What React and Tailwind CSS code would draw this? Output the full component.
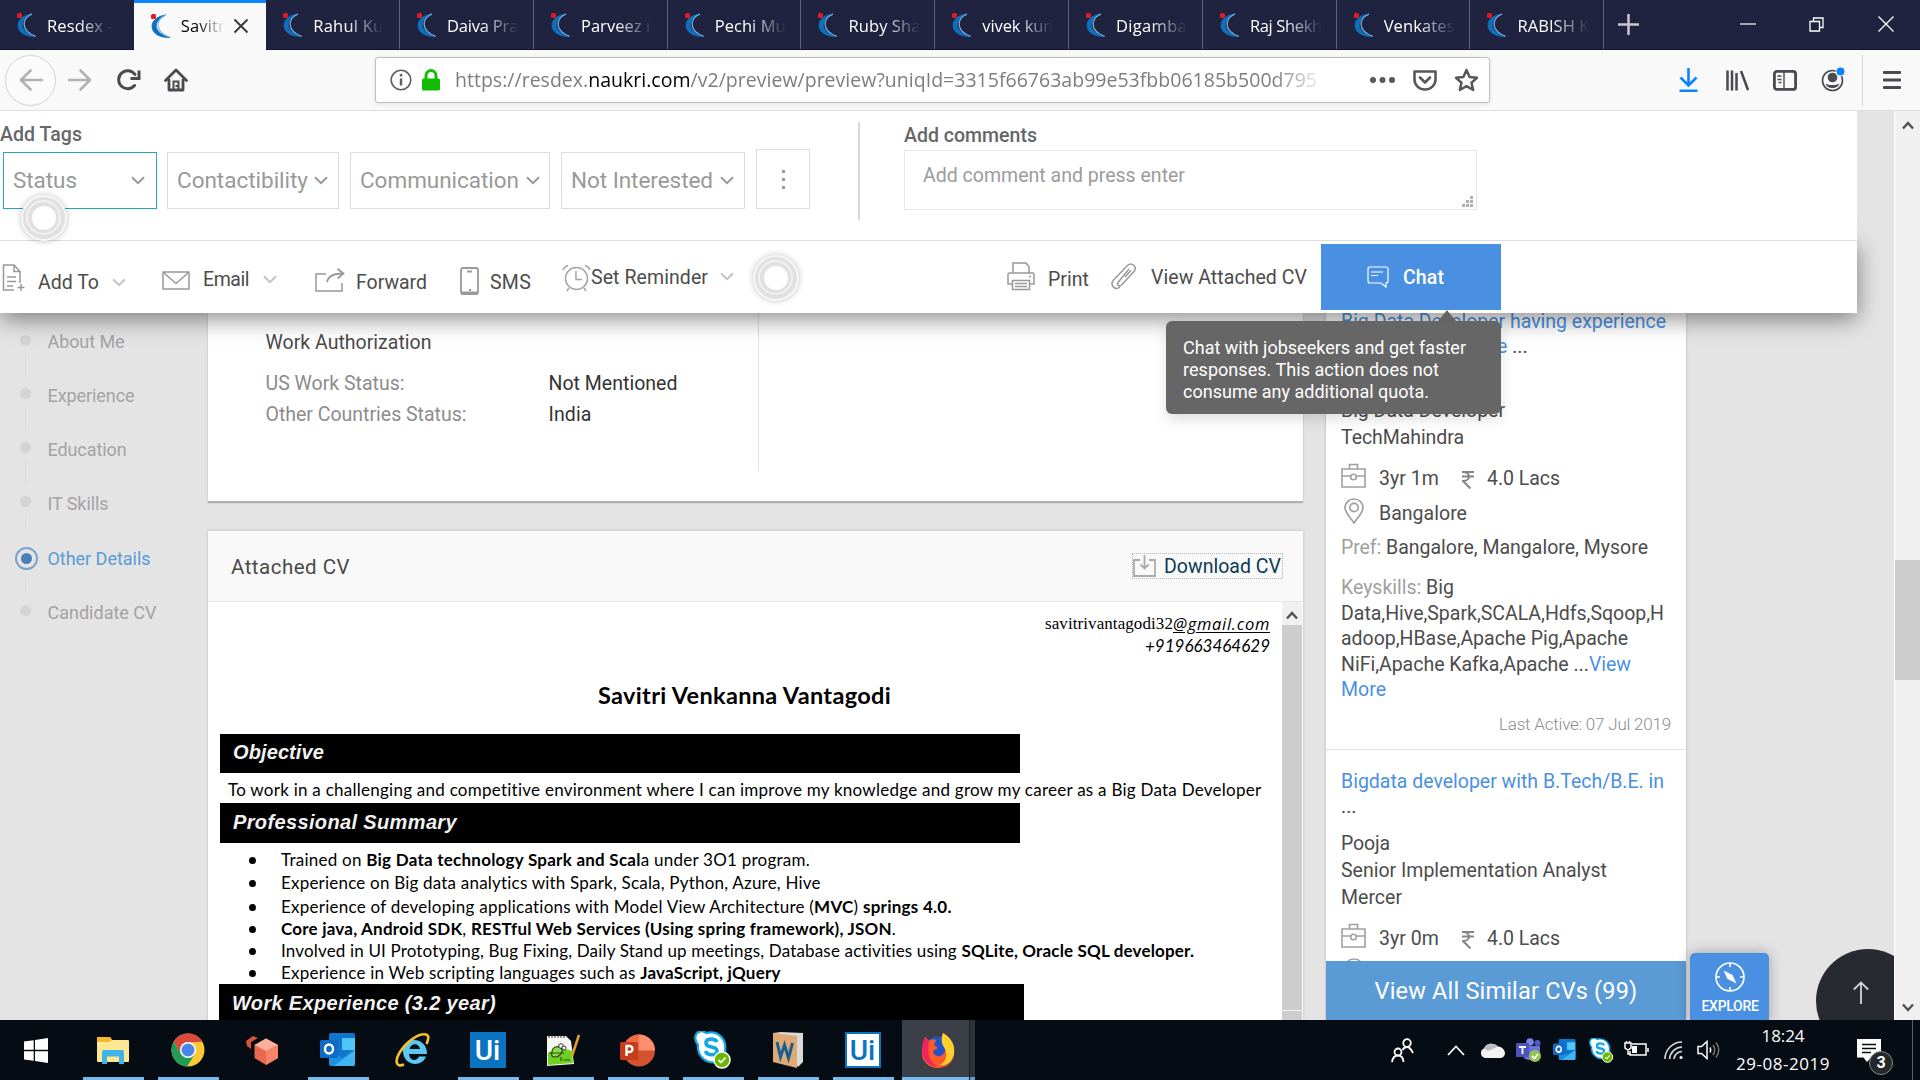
import React, { useLayoutEffect, useRef, useState } from "react";

/* One line of text whose tracking is adjusted so that it is `w` pixels wide. */
function T({ w, className = "", children }) {
  const ref = useRef(null);
  const [spacing, setSpacing] = useState(0);
  useLayoutEffect(() => {
    const el = ref.current;
    if (!w || !el) return;
    el.style.letterSpacing = "0px";
    const natural = el.getBoundingClientRect().width;
    const value = (w - natural) / el.textContent.length;
    el.style.letterSpacing = value + "px";
    setSpacing(value);
  }, [w]);
  return (
    <span ref={ref} style={{ letterSpacing: spacing }} className={"block w-fit shrink-0 whitespace-pre " + className}>
      {children}
    </span>
  );
}

function Svg({ w, h, vb, className = "", children, sw = 1.5 }) {
  return (
    <svg width={w} height={h} viewBox={vb || `0 0 ${w} ${h}`} className={"block shrink-0 " + className} fill="none" stroke="currentColor" strokeWidth={sw}>
      {children}
    </svg>
  );
}

const Chevron = ({ className = "" }) => (
  <Svg w={14} h={9} sw={2} className={className}>
    <path d="M1 1.2 7 7.2 13 1.2" />
  </Svg>
);

const Favicon = () => (
  <Svg w={22} h={25} className="ml-[16px]">
    <path d="M16 1C2 7 3 19 20 23.500C11 24 2 20 2 12.500C2 6 8 2 16 1Z" fill="#0f6fbd" stroke="#0f6fbd" strokeWidth="0.800" />
    <path d="M16 1C5 6 5 18 19.500 23.200" stroke="#7fb6e0" strokeWidth="1.200" />
    <rect x="1" y="0" width="5" height="5" rx="1.500" fill="#e01b24" stroke="none" />
  </Svg>
);

const TABS = [
  ["Resdex -", 66], ["Savitr", 44], ["Rahul Ku", 70], ["Daiva Pra", 71], ["Parveez r", 72], ["Pechi Mu", 71],
  ["Ruby Sha", 72], ["vivek kun", 71], ["Digamba", 71], ["Raj Shekh", 72], ["Venkates", 71], ["RABISH K", 72],
];

function TabBar() {
  return (
    <div className="flex h-[50px] w-[1920px] shrink-0 border-b border-[#12142c] bg-[#202340] font-['Open_Sans',sans-serif]">
      {TABS.map(([name, w], i) =>
        i === 1 ? (
          <div key={name} className="flex h-[50px] w-[132.500px] shrink-0 items-center border-t-[3px] border-[#0a84ff] bg-[#f9f9fa] pb-[1px] text-black">
            <Favicon />
            <T w={w} className="ml-[9px] text-[16.500px] leading-[24px] [mask-image:linear-gradient(to_right,black_35%,transparent_100%)]">{name}</T>
            <Svg w={16} h={16} sw={2} className="ml-[8px] text-[#3c3c3c]"><path d="M1.500 1.500 14.500 14.500M14.500 1.500 1.500 14.500" /></Svg>
          </div>
        ) : (
          <div key={name} className={"flex h-[49px] w-[133.800px] shrink-0 items-center pt-[2px] text-white " + (i > 1 ? "border-r border-[#5d5f74]" : "")}>
            <Favicon />
            <T w={w} className="ml-[9px] text-[16.500px] leading-[24px] [mask-image:linear-gradient(to_right,black_48%,transparent_100%)]">{name}</T>
          </div>
        )
      )}
      <div className="flex h-[48px] grow items-center text-white">
        <Svg w={21} h={21} sw={2.5} className="ml-[14px] text-[#c7c8d0]"><path d="M10.500 0V21M0 10.500H21" /></Svg>
        <Svg w={16} h={2} sw={1.2} className="ml-[101px]"><path d="M0 1H16" /></Svg>
        <Svg w={15} h={15} sw={1.3} className="ml-[53px]"><path d="M1 4.500H10.500V14H1ZM4.500 4.500V1H14V10.500H10.500" /></Svg>
        <Svg w={16} h={16} sw={1.3} className="ml-[54px]"><path d="M.5.5 15.500 15.500M15.500.5.5 15.500" /></Svg>
      </div>
    </div>
  );
}

function Toolbar() {
  return (
    <div className="flex h-[61px] w-[1920px] shrink-0 items-center border-b border-[#dedede] bg-[#f9f9fa] text-[#4a4a4f]">
      <div className="ml-[5px] flex size-[51px] shrink-0 items-center justify-center rounded-full border border-[#d2d2d2] bg-[#fbfbfb] text-[#b1b1b3]">
        <Svg w={24} h={22} sw={2.6}><path d="M23 11H2M11.500 1.500 2 11 11.500 20.500" strokeLinecap="round" strokeLinejoin="round" /></Svg>
      </div>
      <Svg w={24} h={22} sw={2.6} className="ml-[12px] text-[#b1b1b3]"><path d="M1 11H22M12.500 1.500 22 11 12.500 20.500" strokeLinecap="round" strokeLinejoin="round" /></Svg>
      <Svg w={24} h={22} sw={3} className="ml-[25px]">
        <path d="M17.500 16.500A9 9 0 1 1 18 5.500" strokeLinecap="round" />
        <path d="M22 1.500V9.500H13.500" strokeWidth="3" />
      </Svg>
      <Svg w={24} h={24} sw={2.8} className="ml-[23px]">
        <path d="M1.500 12.500 12 2 22.500 12.500M5 12V22H19V12" strokeLinecap="round" strokeLinejoin="round" />
        <path d="M9.500 21V13.500H14.500V21M12.500 17V19" strokeWidth="2" />
      </Svg>
      <div className="ml-[187px] flex h-[46px] w-[1115px] shrink-0 items-center rounded-[3px] border border-[#bebebe] bg-white shadow-[0_1px_4px_rgba(0,0,0,0.1)]">
        <Svg w={22} h={22} sw={1.6} className="ml-[14px] text-[#5f5f63]">
          <circle cx="11" cy="11" r="9.800" /><path d="M11 9.500V16.500M11 5V7.500" strokeWidth="2.400" />
        </Svg>
        <Svg w={18} h={22} className="ml-[10px] text-[#12bc00]">
          <path d="M4 10V6.500A5 5 0 0 1 14 6.500V10" strokeWidth="3" /><rect y="9.500" width="18" height="12" rx="1.500" fill="currentColor" stroke="none" />
        </Svg>
        <T w={862} className="ml-[15px] font-['Open_Sans',sans-serif] text-[19.500px] leading-[28px] text-[#7d7d80] [mask-image:linear-gradient(to_right,black_95%,transparent_101%)]">
          https://resdex.<span className="text-black">naukri.com</span>/v2/preview/preview?uniqId=3315f66763ab99e53fbb06185b500d795
        </T>
        <Svg w={25} h={6} className="ml-[53px] text-[#58585c]"><g fill="currentColor" stroke="none"><circle cx="3" cy="3" r="3" /><circle cx="12.500" cy="3" r="3" /><circle cx="22" cy="3" r="3" /></g></Svg>
        <Svg w={24} h={21} sw={2.6} className="ml-[18px] text-[#58585c]">
          <path d="M1.500 1.500H22.500V9.500A10.500 10 0 0 1 1.500 9.500Z" strokeLinejoin="round" /><path d="M7 7.500 12 12.500 17 7.500" strokeLinecap="round" strokeLinejoin="round" />
        </Svg>
        <Svg w={25} h={24} sw={2.5} className="ml-[17px] text-[#58585c]">
          <path d="M12.500 2 15.600 9 23 9.800 17.500 14.700 19.200 22 12.500 18.200 5.800 22 7.500 14.700 2 9.800 9.400 9Z" strokeLinejoin="round" />
        </Svg>
      </div>
      <Svg w={19} h={24} sw={2.6} className="ml-[189px] text-[#0a84ff]"><path d="M9.500 0V17M1.500 9.500 9.500 17.500 17.500 9.500M.5 22.700H18.500" /></Svg>
      <Svg w={23} h={21} sw={2.5} className="ml-[28px]"><path d="M1.500.5V20.500M6 .5V20.500M10.500 3V20.500M15 1 22 20" /></Svg>
      <Svg w={24} h={21} sw={2.8} className="ml-[24px]">
        <rect x="1.400" y="1.400" width="21.200" height="18" rx="2.500" /><path d="M11 1.500V19.500" strokeWidth="1.400" /><path d="M4.500 6H8.500M4.500 9.500H8.500M5.500 12.500H8.500" strokeWidth="1.500" />
      </Svg>
      <Svg w={24} h={25} sw={1.6} className="ml-[24px] mb-[2px]">
        <circle cx="11.500" cy="13.500" r="10" /><circle cx="11.500" cy="10.500" r="4.800" fill="currentColor" stroke="none" /><path d="M4.500 16.500C8 18.500 15 18.500 18.500 16.500C17 20 14.500 21 11.500 21S6 20 4.500 16.500Z" fill="currentColor" stroke="none" />
        <circle cx="19.500" cy="4.500" r="4.500" fill="#0a84ff" stroke="#f9f9fa" strokeWidth="1" />
      </Svg>
      <div className="ml-[17px] h-[51px] w-px bg-[#d7d7d8]" />
      <Svg w={18} h={20} sw={2.8} className="ml-[20px]"><path d="M1 2.500H17M1 10H17M1 17.500H17" strokeLinecap="round" /></Svg>
    </div>
  );
}

const Pulse = ({ className }) => (
  <div className={"absolute flex size-[46px] items-center justify-center rounded-full border-2 border-[#f7f7f7] bg-[#e0e0e0] shadow-[0_0_6px_rgba(0,0,0,0.25)] " + className}>
    <div className="flex size-[35px] items-center justify-center rounded-full border-2 border-[#f1f1f1] bg-[#e0e0e0]">
      <div className="size-[24px] rounded-full bg-white" />
    </div>
  </div>
);

function ActionPanel() {
  const tag = "flex h-[57px] shrink-0 items-center border border-[#dcdcdc] pl-[9px] pb-[2px] text-[22.500px] leading-[30px] text-[#999]";
  const action = "text-[19.500px] leading-[26px] text-[#4c4c4c]";
  return (
    <div className="relative z-10 h-[202px] w-[1857px] shrink-0 bg-white">
      <div className="relative z-10 flex h-[130px] border-b border-[#dcdcdc] bg-white">
        <div className="w-[858px] pt-[11px]">
          <T w={82} className="text-[19.500px] font-medium leading-[26px] text-[#666]">Add Tags</T>
          <div className="mt-[1px] flex items-end">
            <div className={tag + " ml-[3px] w-[154px] !border-[#25a5c2]"}><T w={64}>Status</T><Chevron className="ml-[54px] mt-[2px]" /></div>
            <div className={tag + " ml-[10px] w-[172px]"}><T w={131}>Contactibility</T><Chevron className="ml-[6px] mt-[2px]" /></div>
            <div className={tag + " ml-[11px] w-[200px]"}><T w={159}>Communication</T><Chevron className="ml-[7px] mt-[2px]" /></div>
            <div className={tag + " ml-[11px] w-[184px]"}><T w={142}>Not Interested</T><Chevron className="ml-[7px] mt-[2px]" /></div>
            <div className="ml-[11px] flex h-[60px] w-[54px] flex-col items-center justify-center gap-[5px] border border-[#dcdcdc]">
              {[0, 1, 2].map((i) => <div key={i} className="size-[3px] bg-[#999]" />)}
            </div>
          </div>
        </div>
        <div className="mt-[11px] h-[98px] w-[2px] bg-[#d9d9d9]" />
        <div className="ml-[44px] pt-[12px]">
          <T w={133} className="text-[19.500px] font-medium leading-[26px] text-[#666]">Add comments</T>
          <div className="mt-[1px] flex h-[60px] w-[573px] justify-between border border-[#e6e6e6] pl-[18px] pr-[2px]">
            <T w={262} className="mt-[12px] text-[19.500px] leading-[26px] text-[#9c9c9c]">Add comment and press enter</T>
            <Svg w={12} h={12} className="mb-[2px] self-end text-[#b0b0b0]"><path d="M0 10.500H3M4 10.500H7M8 10.500H11M4 6.500H7M8 6.500H11M8 2.500H11" strokeWidth="3" /></Svg>
          </div>
        </div>
      </div>
      <div className="flex h-[72px] items-start bg-white pl-px pt-px shadow-[0_6px_22px_rgba(0,0,0,0.45)]">
        <Svg w={23} h={28} className="ml-[1px] mt-[22px] text-[#999]"><path d="M12 26H1.500V1H12L18 7.500V19M12 1V7.500H18M5 13H14M5 17.500H14M5 22H11M19 20V27M15.500 23.500H22.500" /></Svg>
        <T w={61} className={action + " ml-[13px] mt-[28px]"}>Add To</T>
        <Chevron className="ml-[13px] mt-[36px] text-[#c4c4c4]" />
        <Svg w={28} h={19} className="ml-[36px] mt-[29px] text-[#999]"><path d="M1 1H27V18H1ZM1.500 1.500 14 12.500 26.500 1.500" /></Svg>
        <T w={46} className={action + " ml-[13px] mt-[25px]"}>Email</T>
        <Chevron className="ml-[14px] mt-[33px] text-[#c4c4c4]" />
        <Svg w={30} h={24} className="ml-[38px] mt-[26px] text-[#999]"><path d="M11 6H1V23H27V15" /><path d="M12 14C13 9 17 5.500 28.500 5.500M22.500 .8 28.500 5.500 22.500 10.500" strokeWidth="1.800" /></Svg>
        <T w={71} className={action + " ml-[11px] mt-[28px]"}>Forward</T>
        <Svg w={19} h={28} sw={1.8} className="ml-[33px] mt-[25px] text-[#999]"><rect x="1" y="1" width="17" height="26" rx="2" /><path d="M7 4.500H12M9 23H11" /><path d="M1 26H18" strokeWidth="3" /></Svg>
        <T w={41} className={action + " ml-[11px] mt-[28px]"}>SMS</T>
        <Svg w={29} h={28} className="ml-[31px] mt-[22px] text-[#a5a5a5]"><circle cx="14.500" cy="14.500" r="11" /><path d="M14 7V15.500H20M1 6A7 7 0 0 1 6 1.500M28 6A7 7 0 0 0 23 1.500M7 24 5 27M22 24 24 27" /></Svg>
        <T w={117} className={action + " mt-[23px]"}>Set Reminder</T>
        <Chevron className="ml-[12px] mt-[30px] text-[#c4c4c4]" />
        <Svg w={28} h={29} className="ml-[273px] mt-[20px] text-[#999]"><path d="M6 11V1H19L22 4.500V11M6 22H1V12.500Q1 11 2.500 11H25.500Q27 11 27 12.500V22H22M5.500 18.500H22.500V27.500H5.500ZM8 21.500H20M8 24.500H20M22 14.500H24" /></Svg>
        <T w={41} className={action + " ml-[13px] mt-[25px]"}>Print</T>
        <Svg w={27} h={27} className="ml-[21px] mt-[21px] text-[#999]"><path d="M19 6 8 19.500C6.500 22 9.500 24 11.500 22L24 8.500C27.500 4 22 -1.500 17.500 2.500L3.500 17C-.5 22 5 28 10 24" /><path d="M15 14 21 7.500" /></Svg>
        <T w={156} className={action + " ml-[14px] mt-[23px]"}>View Attached CV</T>
        <div className="relative ml-[14px] mt-[2px] flex h-[66px] w-[180px] shrink-0 items-center bg-[#4a90e2] pl-[46px] text-white">
          <Svg w={22} h={22} sw={1.2}><path d="M3 1H19Q21 1 21 3V15Q21 17 19 17V21L14 17H3Q1 17 1 15V3Q1 1 3 1ZM4 6H16M4 9.500H11" /></Svg>
          <T w={41} className="ml-[14px] mt-[1px] text-[19.500px] font-medium leading-[26px]">Chat</T>
          <div className="absolute left-[117px] top-[66px] size-0 border-x-[9px] border-b-[11px] border-x-transparent border-b-[#666]" />
          <div className="absolute -left-[155px] top-[77px] flex h-[93px] w-[335px] flex-col rounded-[6px] bg-[#666] pl-[17px] pt-[16px] text-[18px] leading-[22px] shadow-[0_6px_14px_rgba(0,0,0,0.12)]">
            <T w={283}>Chat with jobseekers and get faster</T>
            <T w={256}>responses. This action does not</T>
            <T w={246}>consume any additional quota.</T>
          </div>
        </div>
      </div>
      <Pulse className="left-[20.500px] top-[83.500px] z-20" />
      <Pulse className="left-[752.500px] top-[143.500px] z-20" />
    </div>
  );
}

const NAV = [["About Me", 77], ["Experience", 87], ["Education", 79], ["IT Skills", 61], ["Other Details", 103], ["Candidate CV", 109]];

function SideNav() {
  return (
    <div className="w-[208px] shrink-0">
      {NAV.map(([name, w], i) => (
        <div key={name} className="flex h-[54.150px] items-start">
          <div className="ml-[14px] flex h-[54px] w-[23px] shrink-0 flex-col items-center">
            {i === 4 ? (
              <div className="ml-[2px] mt-[17px] flex size-[23px] shrink-0 items-center justify-center rounded-full border-2 border-[#7ba3cb]"><div className="size-[11px] rounded-full bg-[#4a80b8]" /></div>
            ) : (
              <>
                <div className={"w-px " + (i === 0 ? "h-[10px]" : "h-[9px] bg-[#dadada]")} />
                <div className="mt-[12px] size-[11px] shrink-0 rounded-full bg-[#d4d4d4]" />
              </>
            )}
            {i < 5 && <div className="mt-[8px] w-px grow bg-[#dadada]" />}
          </div>
          <T w={w} className={"ml-[10.500px] mt-[16px] text-[18px] leading-[26px] " + (i === 4 ? "text-[#5b9bd5]" : "text-[#a3a3a3]")}>{name}</T>
        </div>
      ))}
    </div>
  );
}

const Up = ({ className = "" }) => <Svg w={12} h={9} sw={2.4} className={className}><path d="M1 7.500 6 2 11 7.500" /></Svg>;

const SectionBar = ({ w, children, className }) => (
  <div className={"flex shrink-0 bg-black text-[#f2f2f2] font-['Liberation_Sans',sans-serif] text-[20px] font-bold italic leading-[24px] " + className}>
    <T w={w}>{children}</T>
  </div>
);

const Bullet = ({ w, className = "", children }) => (
  <div className={"flex h-[22px] items-center " + className}>
    <div className="ml-[41px] size-[7px] rounded-full bg-black" />
    <T w={w} className="ml-[25px]">{children}</T>
  </div>
);

function MainColumn() {
  return (
    <div className="flex w-[1095px] shrink-0 flex-col">
      <div className="flex h-[188px] shrink-0 bg-white text-[19.500px] shadow-[0_2px_1px_#b0b0b0,0_0_2px_#ccc]">
        <div className="h-[158px] w-[551px] border-r border-[#e2e2e2] pl-[57.500px] pt-[17px] leading-[26px]">
          <T w={166} className="text-[#4a4a4a]">Work Authorization</T>
          <div className="mt-[15px] flex text-[#8c8c8c]"><div className="w-[283px]"><T w={139}>US Work Status:</T></div><T w={129} className="text-[#333]">Not Mentioned</T></div>
          <div className="mt-[5px] flex text-[#8c8c8c]"><div className="w-[283px]"><T w={201}>Other Countries Status:</T></div><T w={43} className="text-[#333]">India</T></div>
        </div>
      </div>
      <div className="mt-[30px] flex h-[489px] shrink-0 flex-col bg-white shadow-[0_0_3px_#bbb]">
        <div className="flex h-[71px] shrink-0 items-center justify-between border-b border-[#e4e4e4] bg-[#f9f9f9] pl-[23px] pr-[20px]">
          <T w={119} className="mt-[1px] text-[20.500px] leading-[26px] text-[#4a4a4a]">Attached CV</T>
          <div className="flex h-[26px] w-[151px] items-center border border-dotted border-[#b5b5b5]">
            <Svg w={23} h={22} sw={1.8} className="text-[#aaa]"><path d="M7 5H1V21H22V5H16M11.500 0V13M7.500 9.500 11.500 13.500 15.500 9.500" /></Svg>
            <T w={117} className="ml-[8px] mt-[1px] text-[19.500px] leading-[26px] text-[#0c3a57]">Download CV</T>
          </div>
        </div>
        <div className="flex h-[418px] overflow-hidden">
          <div className="w-[1074px] shrink-0 pt-[11px] font-['Lato',sans-serif] text-[17px] leading-[22px] text-black">
            <div className="flex justify-end pr-[12px]">
              <T w={128} className="font-['Liberation_Serif',serif] text-[17px]">savitrivantagodi32</T>
              <T w={97} className="font-['Open_Sans',sans-serif] text-[16.500px] italic underline underline-offset-2">@gmail.com</T>
            </div>
            <div className="flex justify-end pr-[12px]"><T w={125} className="italic">+919663464629</T></div>
            <T w={293} className="ml-[390px] mt-[23px] text-[23.500px] font-bold leading-[30px]">Savitri Venkanna Vantagodi</T>
            <SectionBar w={91} className="mt-[24px] ml-[12px] h-[39px] w-[800px] pl-[13px] pt-[6px]">Objective</SectionBar>
            <div className="flex h-[30px] pl-[20px] pt-[6px]"><T w={1034}>To work in a challenging and competitive environment where I can improve my knowledge and grow my career as a Big Data Developer</T></div>
            <SectionBar w={224} className="ml-[12px] h-[40px] w-[800px] pl-[13px] pt-[7px]">Professional Summary</SectionBar>
            <Bullet w={529} className="mt-[6px]">Trained on <b>Big Data technology Spark and Scal</b>a under 3O1 program.</Bullet>
            <Bullet w={540} className="mt-[1px]">Experience on Big data analytics with Spark, Scala, Python, Azure, Hive</Bullet>
            <Bullet w={671} className="mt-[2px]">Experience of developing applications with Model View Architecture (<b>MVC</b>) <b>springs 4.0.</b></Bullet>
            <Bullet w={615}><b>Core java, Android SDK</b>, <b>RESTful Web Services (Using spring framework), JSON</b>.</Bullet>
            <Bullet w={914}>Involved in UI Prototyping, Bug Fixing, Daily Stand up meetings, Database activities using <b>SQLite, Oracle SQL developer.</b></Bullet>
            <Bullet w={500}>Experience in Web scripting languages such as <b>JavaScript, jQuery</b></Bullet>
            <SectionBar w={264} className="ml-[11px] h-[40px] w-[805px] pl-[13px] pt-[7px]">Work Experience (3.2 year)</SectionBar>
          </div>
          <div className="flex w-[20px] flex-col bg-[#f0f0f0]">
            <div className="flex h-[23px] shrink-0 items-center justify-center pt-[3px] text-[#505050]"><Up /></div>
            <div className="h-[385px] bg-[#cdcdcd]" />
            <div className="mt-px h-[9px] bg-[#cdcdcd]" />
          </div>
        </div>
      </div>
    </div>
  );
}

const Pin = () => <Svg w={20} h={26} sw={1.7} className="mb-[6px] ml-[3px] text-[#a0a0a0]"><path d="M10 1C4.500 1 1 5 1 9.500C1 15 7 20 10 25C13 20 19 15 19 9.500C19 5 15.500 1 10 1Z" /><circle cx="10" cy="9.500" r="4.200" /></Svg>;

function CandidateHead({ title, ellipsis, person, role, company, exp }) {
  return (
    <>
      <div className="text-[#4a90e2]">
        <T w={title[1]} className="leading-[25px]">{title[0]}</T>
        <div className="h-[25px] leading-[25px]">{ellipsis}</div>
      </div>
      <div className="mt-[11px] leading-[27px]">
        <div className="h-[27px]">{person}</div>
        <T w={role[1]}>{role[0]}</T>
        <T w={company[1]}>{company[0]}</T>
      </div>
      <div className="mt-[13px] flex h-[30px] items-center leading-[26px]">
        <Svg w={25} h={25} sw={1.6} className="mb-[7px] text-[#a0a0a0]"><path d="M1 6H24V24H1ZM8.500 6V1.500H16.500V6M1 13H10M15 13H24" /><circle cx="12.500" cy="14" r="2.800" /></Svg>
        <T w={60} className="ml-[13px]">{exp}</T>
        <Svg w={12} h={18} sw={2} className="ml-[23px] mt-[1px] text-[#858585]"><path d="M0 1H12M0 5.500H12M1 1C9 1 9 10 1 10L8.500 17.500" /></Svg>
        <T w={73} className="ml-[13px]">4.0 Lacs</T>
      </div>
    </>
  );
}

function SimilarPanel() {
  return (
    <div className="ml-[23px] flex h-[707px] w-[360px] shrink-0 flex-col bg-white text-[19.500px] text-[#4c4c4c] shadow-[0_0_3px_#bbb]">
      <div className="h-[648px] overflow-hidden">
        <div className="-mt-[23px] h-[460px] border-b border-[#e4e4e4] pl-[15px] pt-[19px]">
          <CandidateHead
            title={["Big Data Developer having experience", 325]}
            ellipsis={<span className="ml-[156px]">e <span className="text-[#4c4c4c]">...</span></span>}
            role={["Big Data Developer", 164]}
            company={["TechMahindra", 123]}
            exp="3yr 1m"
          />
          <div className="mt-[5px] flex h-[30px] items-center leading-[26px]"><Pin /><T w={88} className="ml-[15px]">Bangalore</T></div>
          <div className="mt-[6px] flex leading-[26px]"><T w={45} className="text-[#a0a0a0]">Pref: </T><T w={262}>Bangalore, Mangalore, Mysore</T></div>
          <div className="mt-[14px] leading-[25.500px]">
            <div className="flex"><T w={85} className="text-[#a0a0a0]">Keyskills: </T><T w={28}>Big</T></div>
            <T w={323}>Data,Hive,Spark,SCALA,Hdfs,Sqoop,H</T>
            <T w={287}>adoop,HBase,Apache Pig,Apache</T>
            <T w={290}>NiFi,Apache Kafka,Apache ...<span className="text-[#4a90e2]">View</span></T>
            <T w={45} className="text-[#4a90e2]">More</T>
          </div>
          <div className="mt-[9px] flex justify-end pr-[15px]"><T w={172} className="text-[17px] font-light leading-[24px] text-[#8c8c8c]">Last Active: 07 Jul 2019</T></div>
        </div>
        <div className="pl-[15px] pt-[19px]">
          <CandidateHead
            title={["Bigdata developer with B.Tech/B.E. in", 323]}
            ellipsis={<span className="text-[#4c4c4c]">...</span>}
            person={<T w={49}>Pooja</T>}
            role={["Senior Implementation Analyst", 266]}
            company={["Mercer", 61]}
            exp="3yr 0m"
          />
          <div className="mt-[5px] flex h-[30px] items-center"><Pin /></div>
        </div>
      </div>
      <div className="flex h-[59px] shrink-0 items-center justify-center bg-[#5b9bd5] text-white"><T w={263} className="text-[23.500px] leading-[30px]">View All Similar CVs (99)</T></div>
    </div>
  );
}

/* ---- taskbar icons ---- */
const WindowsIcon = () => <Svg w={24} h={25}><path d="M0 3.500 9.700 2.200V11.800H0ZM11 2 24 0V11.800H11ZM0 13.200H9.700V22.700L0 21.400ZM11 13.200H24V25L11 23Z" fill="#fff" stroke="none" /></Svg>;
const FolderIcon = () => (
  <Svg w={32} h={27}><g stroke="none"><path d="M0 1Q0 0 1 0H13L15 3H31Q32 3 32 4V24Q32 25 31 25H1Q0 25 0 24Z" fill="#ffe793" /><path d="M0 5V1Q0 0 1 0H13L15 3L12 5Z" fill="#f3b92c" /><path d="M5 27V15Q5 13 7 13H25Q27 13 27 15V27H22V19.500H10V27Z" fill="#3fb4e8" /></g></Svg>
);
const ChromeIcon = () => (
  <Svg w={34} h={34}><g stroke="none"><circle cx="17" cy="17" r="16.500" fill="#fcc934" /><path d="M2.700 8.800A16.500 16.500 0 0 1 31.300 8.800L17 9.500 10 21Z" fill="#d94a3d" /><path d="M2.700 8.800A16.500 16.500 0 0 0 16 33.500L24 21 10 21Z" fill="#1f9d58" /><circle cx="17" cy="17" r="8" fill="#fff" /><circle cx="17" cy="17" r="6.500" fill="#4a86e8" /></g></Svg>
);
const CubeIcon = () => (
  <Svg w={33} h={29}><g stroke="none"><path d="M20 2.500 32 9V22L20 29 8.500 22V9Z" fill="#e8694f" /><path d="M20 2.500 32 9 20 15 8.500 9Z" fill="#fab09a" /><path d="M20 15 32 9V22L20 29Z" fill="#f58469" /><path d="M0 5 7 0 12 2 5 6V13L1 10Z" fill="#d9543c" /></g></Svg>
);
const OutlookIcon = ({ s = 36 }) => (
  <Svg w={s} h={s * 0.92} vb="0 0 36 33"><rect x="9" width="26" height="32" rx="2" fill="#1275cc" stroke="none" /><path d="M22 5H35V17H22Z" fill="#4fc8f5" stroke="none" /><path d="M9 17 22 25 35 17V31Q35 33 33 33H11Q9 33 9 31Z" fill="#1e90e0" stroke="none" /><path d="M35 17 14 33H33Q35 33 35 31Z" fill="#40b5f0" stroke="none" /><rect y="7" width="18" height="18" rx="1.500" fill="#0f6cc4" stroke="none" /><ellipse cx="9" cy="16" rx="4" ry="4.500" stroke="#fff" strokeWidth="2.400" /></Svg>
);
const IeIcon = () => (
  <Svg w={36} h={36}><path d="M31 24.500C27 36 8 34 8 19C8 4 32 4 32 22H14C15 30 22 29 24 24.500ZM14.500 17H25C24 10.500 16 10.500 14.500 17Z" fill="#5cc8f2" fillRule="evenodd" stroke="none" /><path d="M9 32.500C0 36 0 28 5 20C12 9 24 1 31 2.500C35 4 33 8 31.500 12" stroke="#f3c12e" strokeWidth="2.600" /></Svg>
);
const UiIcon = ({ inverse }) => (
  <div className={"flex size-[36px] items-center justify-center pt-[2px] font-['Roboto',sans-serif] text-[28px] font-medium leading-none " + (inverse ? "border-2 border-[#0a73c2] bg-white text-[#0a73c2]" : "bg-[#0a73c2] text-white")}>Ui</div>
);
const NotepadIcon = () => (
  <Svg w={34} h={34}>
    <path d="M1 3H20L25 8 28 31 1 33Z" fill="#f5f7f0" stroke="none" />
    <path d="M2 20Q14 13 26 18L27 30 2 32Z" fill="#6fd01f" stroke="none" />
    <path d="M3 3V5M6 3V5M9 3V5M12 3V5M15 3V5M18 3V5" stroke="#777" />
    <path d="M6 19C6 14 12 12 15 15S14 24 9 24 6 21 6 19Z" fill="#8edb4a" stroke="#2c4b14" strokeWidth="1.200" />
    <circle cx="15" cy="13" r="2.300" fill="#fff" stroke="#333" strokeWidth="1" /><circle cx="18" cy="15" r="2" fill="#fff" stroke="#333" strokeWidth="1" />
    <path d="M3 20H18M15 24V28M17 27H24" stroke="#2c4b14" strokeWidth="1.200" /><path d="M33 2 26 23" stroke="#e6a02f" strokeWidth="2.500" />
  </Svg>
);
const PowerpointIcon = () => (
  <Svg w={36} h={33}><g stroke="none"><circle cx="19" cy="16.500" r="16" fill="#d35230" /><path d="M19 .5A16 16 0 0 1 35 16.500H19Z" fill="#ff8f6b" /><path d="M19 .5A16 16 0 0 0 3 16.500H19Z" fill="#ed6c47" /><rect y="8" width="18" height="18" rx="1.500" fill="#c43e1c" /></g><path d="M6.500 22V12H9.500A2.800 2.800 0 0 1 9.500 18H6.500" stroke="#fff" strokeWidth="2.300" /></Svg>
);
const SkypeIcon = ({ s = 38 }) => (
  <Svg w={s} h={s} vb="0 0 38 38"><path d="M3 2Q8-2 12 2C24-1 33 8 31 20C34 28 28 33 22 31C11 33 3 24 4 14Q-1 7 3 2Z" fill="#fff" stroke="#0fa7e6" strokeWidth="2.200" /><path d="M23 11C21 7 12 7 12 12C12 18 23 14 23 20C23 25 13 25 11.500 20" stroke="#0fa7e6" strokeWidth="3.600" /><circle cx="28" cy="29" r="8" fill="#6bb700" stroke="#fff" strokeWidth="1.500" /><path d="M24.500 29 27 31.500 31.500 26.500" stroke="#fff" strokeWidth="1.800" /></Svg>
);
const WordBookIcon = () => (
  <Svg w={30} h={36}><path d="M0 1 8 0 30 1V30L25 35Z" fill="#d9d9d9" stroke="none" /><path d="M0 1 24 4V36L0 30Z" fill="#e0a873" stroke="none" /><path d="M4 10 7.500 25 11.500 13 15.500 26 19.500 11" stroke="#175f93" strokeWidth="3" /></Svg>
);
const FirefoxIcon = () => (
  <Svg w={34} h={35}><g stroke="none"><circle cx="17" cy="18.500" r="15" fill="#2453c4" /><path d="M22 0C32 6 34 14 33 21A16 14.500 0 0 1 1 20C1 13 3 8 4 4L8 8Q11 5 15 7L13 12 17 15 12 18C13 24 20 25 23 20C27 14 20 10 22 0Z" fill="#ff5a2c" /><path d="M22 0C32 6 34 14 33 21C31 30 24 33 19 32C28 27 25 18 24 16C20 10 20 6 22 0Z" fill="#ffcf2e" /><path d="M4 4C1 10 0 18 3 25C6 31 12 34 17 34C8 29 6 20 8 8Z" fill="#f0245c" /></g></Svg>
);

const APPS = [
  [FolderIcon, true], [ChromeIcon, true], [CubeIcon, false], [OutlookIcon, true], [IeIcon, false], [UiIcon, true],
  [NotepadIcon, true], [PowerpointIcon, true], [SkypeIcon, true], [WordBookIcon, true],
];

function Taskbar() {
  return (
    <div className="relative z-20 flex h-[60px] w-[1920px] shrink-0 bg-[#060c14] text-white">
      <div className="flex w-[76px] shrink-0 items-center pl-[24px]"><WindowsIcon /></div>
      {APPS.map(([Icon, open], i) => (
        <div key={i} className="flex w-[75px] shrink-0 flex-col items-center">
          <div className="flex h-[57px] items-center pr-[2px] pt-[3px]"><Icon /></div>
          {open && <div className="h-[3px] w-[61px] bg-[#76b9ed]" />}
        </div>
      ))}
      <div className="flex w-[75px] shrink-0 flex-col items-center">
        <div className="flex h-[57px] items-center pr-[2px] pt-[3px]"><UiIcon inverse /></div>
        <div className="h-[3px] w-[61px] bg-[#76b9ed]" />
      </div>
      <div className="ml-px flex w-[67px] shrink-0 flex-col bg-[#3b4048]">
        <div className="flex h-[57px] items-center pl-[19px] pt-[3px]"><FirefoxIcon /></div>
        <div className="h-[3px] bg-[#76b9ed]" />
      </div>
      <div className="flex w-[6px] shrink-0 flex-col border-l border-[#1c2026] bg-[#2e3238]"><div className="mt-[57px] h-[3px] bg-[#5f9bc9]" /></div>
      <div className="flex grow items-center pl-[416px]">
        <Svg w={23} h={25} sw={1.8}><circle cx="16" cy="5" r="3.800" /><circle cx="7" cy="14" r="3.500" /><path d="M1 24Q2 17.500 7 17.500T12.500 24M11.500 12Q13 9 16 9T22 15" /></Svg>
        <Svg w={18} h={11} sw={1.8} className="ml-[33px]"><path d="M1 10 9 1.500 17 10" /></Svg>
        <Svg w={25} h={16} className="ml-[15px]"><path d="M5 16A5 5 0 0 1 4 6.500A8 7 0 0 1 18 4.500Q24 5 25 11Q25 15 21 16Z" fill="#f2f2f2" stroke="none" /><path d="M4 6.500A8 7 0 0 1 18 4.500L8 9Z" fill="#b9bcc0" stroke="none" /></Svg>
        <Svg w={25} h={24} className="ml-[11px]"><g stroke="none"><circle cx="14" cy="4" r="3.800" fill="#7b83eb" /><circle cx="21.500" cy="5" r="3" fill="#5059c9" /><path d="M8 8H24V16Q22 22 14 22T8 16Z" fill="#6b73dc" /><rect y="5" width="13" height="14" rx="1" fill="#4b53bc" /><circle cx="19" cy="18" r="6" fill="#92c353" /></g><path d="M3 9H10M6.500 9V16M16 18 18.500 20.500 22 16" stroke="#fff" strokeWidth="1.800" /></Svg>
        <div className="ml-[12px]"><OutlookIcon s={23} /></div>
        <div className="ml-[13px]"><SkypeIcon s={25} /></div>
        <Svg w={25} h={18} sw={1.5} className="ml-[10px]"><path d="M8 3H22V14H6V10M24 7V11M1 2H7V7L4 9 1 7ZM2.500 2V0M5.500 2V0M4 9V13H6" /><rect x="8" y="5" width="5" height="7" fill="#fff" stroke="none" /></Svg>
        <Svg w={19} h={20} sw={1.6} className="ml-[15px]"><path d="M1 19A17 17 0 0 1 18 2M5.500 19A13 13 0 0 1 18 7M10 19A8 8 0 0 1 18 11.500" stroke="#d8d8d8" /><circle cx="17" cy="17.500" r="1.500" fill="#fff" stroke="none" /></Svg>
        <Svg w={23} h={20} sw={1.5} className="ml-[14px]"><path d="M1 6.500H4.500L10 1.500V18.500L4.500 13.500H1Z" /><path d="M13 7.500Q14.500 10 13 12.500" /><path d="M16 5Q19.500 10 16 15M19 2.500Q24.500 10 19 17.500" stroke="#777" /></Svg>
        <div className="ml-[15px] flex w-[96px] flex-col items-center font-['Open_Sans',sans-serif] text-[17px] leading-[28px]">
          <T w={43}>18:24</T>
          <T w={94}>29-08-2019</T>
        </div>
        <div className="relative ml-[26px]">
          <Svg w={25} h={23}><path d="M0 0H24V18.500H14L10 23 6.500 18.500H0Z" fill="#fff" stroke="none" /><path d="M5 5.500H19M5 9.500H19M5 13.500H14" stroke="#060c14" strokeWidth="1.300" /></Svg>
          <div className="absolute left-[12px] top-[12px] flex size-[24px] items-center justify-center rounded-full border border-[#8a8a8a] bg-[#24272b] text-[16px] font-bold">3</div>
        </div>
        <div className="ml-[30px] h-[60px] w-px bg-[#5a5d61]" />
      </div>
    </div>
  );
}

export default function App() {
  return (
    <div className="flex h-[1080px] w-[1920px] flex-col overflow-hidden bg-[#e4e4e4] font-['Roboto',sans-serif]">
      <TabBar />
      <Toolbar />
      <div className="flex h-[909px] w-[1920px] shrink-0">
        <div className="relative flex h-[909px] w-[1894px] shrink-0 flex-col overflow-hidden">
          <ActionPanel />
          <div className="flex h-[707px] shrink-0">
            <SideNav />
            <MainColumn />
            <SimilarPanel />
          </div>
          <div className="absolute left-[1690px] top-[842px] flex h-[70px] w-[79px] flex-col items-center rounded-t-[5px] bg-[#4a90e2] pt-[9px] text-white shadow-[0_0_14px_rgba(0,0,0,0.3)]">
            <Svg w={30} h={30} sw={1.7}><circle cx="15" cy="15" r="14" /><path d="M15 1V5M15 25V29M1 15H5M25 15H29" /><path d="M8.500 8.500 17.500 13 21.500 21.500 12.500 17Z" fill="#fff" stroke="none" /></Svg>
            <T w={57} className="ml-[1px] mt-[4px] text-[14px] font-medium leading-[20px]">EXPLORE</T>
          </div>
          <div className="absolute left-[1816px] top-[838px] flex size-[104px] rounded-full bg-[#282a32] pl-[37px] pt-[32px] text-[#d4d4d6]">
            <Svg w={16} h={23} sw={1.8}><path d="M8 23V1.500M.8 8.500 8 1.500 15.200 8.500" /></Svg>
          </div>
        </div>
        <div className="flex h-[909px] w-[26px] flex-col items-center border-l border-white bg-[#f0f0f0] text-[#505050]">
          <Up className="mt-[10px]" />
          <div className="mt-[430px] h-[120px] w-full bg-[#cdcdcd]" />
          <Up className="mt-[323px] rotate-180" />
        </div>
      </div>
      <Taskbar />
    </div>
  );
}
